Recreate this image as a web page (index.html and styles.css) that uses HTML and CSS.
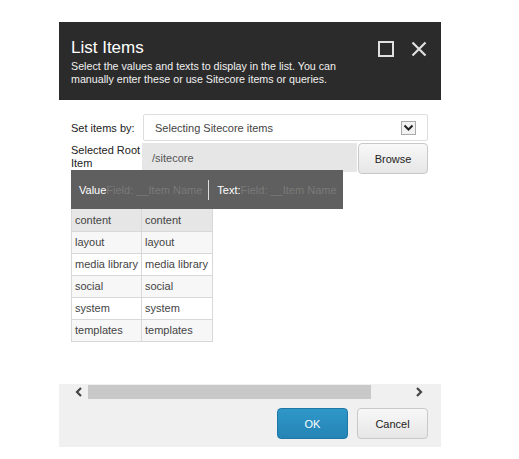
FILE: index.html
```html
<!DOCTYPE html>
<html>
<head>
<meta charset="utf-8">
<link rel="stylesheet" href="styles.css">
</head>
<body>
<div class="dialog">
  <div class="header">
    <div class="title-row">
      <div class="title">List Items</div>
      <div class="tools">
        <svg width="16" height="16" viewBox="0 0 16 16"><rect x="1" y="1" width="14" height="14" fill="none" stroke="#e0e0e0" stroke-width="2"/></svg>
        <svg width="16" height="16" viewBox="0 0 16 16"><path d="M1.5 1.5 L14.5 14.5 M14.5 1.5 L1.5 14.5" stroke="#e0e0e0" stroke-width="2.2" fill="none"/></svg>
      </div>
    </div>
    <div class="desc">Select the values and texts to display in the list. You can manually enter these or use Sitecore items or queries.</div>
  </div>
  <div class="content">
    <div class="row row1">
      <div class="label">Set items by:</div>
      <div class="select">
        <span>Selecting Sitecore items</span>
        <span class="caret"><svg width="11" height="8" viewBox="0 0 11 8"><path d="M1.5 1.5 L5.5 5.5 L9.5 1.5" stroke="#222" stroke-width="2" fill="none"/></svg></span>
      </div>
    </div>
    <div class="row row2">
      <div class="label two">Selected Root Item</div>
      <div class="input">/sitecore</div>
      <div class="btn browse">Browse</div>
    </div>
    <div class="bar">
      <span class="bl">Value</span><span class="ph">Field: __Item Name</span>
      <span class="sep"></span>
      <span class="bl">Text:</span><span class="ph">Field: __Item Name</span>
    </div>
    <table class="items">
      <tr class="first"><td>content</td><td>content</td></tr>
      <tr class="alt"><td>layout</td><td>layout</td></tr>
      <tr><td>media library</td><td>media library</td></tr>
      <tr class="alt"><td>social</td><td>social</td></tr>
      <tr><td>system</td><td>system</td></tr>
      <tr class="alt"><td>templates</td><td>templates</td></tr>
    </table>
  </div>
  <div class="footer">
    <div class="scroll">
      <svg class="arr" width="8" height="10" viewBox="0 0 8 10"><path d="M6 1 L2 5 L6 9" stroke="#444" stroke-width="2.2" fill="none"/></svg>
      <div class="track"><div class="thumb"></div></div>
      <svg class="arr" width="8" height="10" viewBox="0 0 8 10"><path d="M2 1 L6 5 L2 9" stroke="#444" stroke-width="2.2" fill="none"/></svg>
    </div>
    <div class="buttons">
      <div class="btn ok">OK</div>
      <div class="btn cancel">Cancel</div>
    </div>
  </div>
</div>
</body>
</html>
```
FILE: styles.css
```css
html, body { margin: 0; padding: 0; background: #fff; }
body { font-family: "Liberation Sans", Arial, sans-serif; color: #333; }
.dialog { margin: 22px 0 0 59px; width: 382px; }
.header { background: #2b2b2b; height: 78px; padding: 16px 14px 0 12px; box-sizing: border-box; color: #fff; }
.title-row { display: flex; justify-content: space-between; align-items: flex-start; }
.title { font-size: 17px; line-height: 20px; }
.tools { display: flex; gap: 17px; padding-top: 3px; }
.desc { font-size: 10.7px; line-height: 13px; margin-top: 2px; color: #f0f0f0; width: 300px; }
.content { height: 284px; box-sizing: border-box; padding: 14px 13px 0 12px; font-size: 11px; }
.row { display: flex; align-items: flex-start; }
.label { width: 72px; flex: none; color: #222; }
.row1 { height: 29px; }
.row1 .label { padding-top: 8px; }
.select { flex: 1; height: 27px; box-sizing: border-box; border: 1px solid #ddd; border-radius: 2px; display: flex; align-items: center; justify-content: space-between; padding: 0 11px 0 11px; color: #444; }
.caret { width: 15px; height: 14px; box-sizing: border-box; border: 1px solid #aaa; background: #f2f2f2; display: flex; align-items: center; justify-content: center; }
.row2 { height: 27px; }
.label.two { line-height: 13px; padding-top: 1px; width: 71px; }
.input { width: 215px; height: 29px; background: #e6e6e6; box-sizing: border-box; padding: 9px 10px; color: #555; }
.btn { box-sizing: border-box; display: flex; align-items: center; justify-content: center; border-radius: 4px; }
.browse { width: 70px; height: 31px; border: 1px solid #c8c8c8; background: linear-gradient(#f8f8f8, #e6e6e6); color: #222; margin-left: 1px; }
.bar { width: 272px; height: 39px; background: #5f5f5f; display: flex; align-items: center; padding-left: 8px; box-sizing: border-box; position: relative; }
.bl { color: #fff; }
.ph { color: #7a7a7a; }
.sep { width: 1px; height: 20px; background: #ddd; margin: 0 8px 0 6px; }
.items { border-collapse: collapse; }
.items td { border: 1px solid #d8d8d8; height: 22px; padding: 0 3px; color: #444; box-sizing: border-box; }
.items td:first-child { width: 70px; }
.items td:last-child { width: 71px; }
.items tr.first td { background: #e6e6e6; border-top: none; }
.items tr.alt td { background: #f7f7f7; }
.footer { background: #f0f0f0; height: 63px; }
.scroll { height: 15px; display: flex; align-items: center; padding: 0 14px 0 12px; }
.arr { flex: none; margin: 0 4px; }
.scroll .arr:first-child { margin: 0 5px 0 4px; }
.track { flex: 1; height: 14px; }
.thumb { width: 283px; height: 14px; background: #c8c8c8; }
.buttons { display: flex; justify-content: flex-end; gap: 9px; padding: 9px 13px 0 0; }
.ok { width: 71px; height: 31px; background: linear-gradient(#2f97c8, #2584b6); color: #fff; border: 1px solid #1f77a6; font-size: 11px; }
.cancel { width: 71px; height: 31px; border: 1px solid #c8c8c8; background: linear-gradient(#f8f8f8, #e6e6e6); color: #222; font-size: 11px; }
```
